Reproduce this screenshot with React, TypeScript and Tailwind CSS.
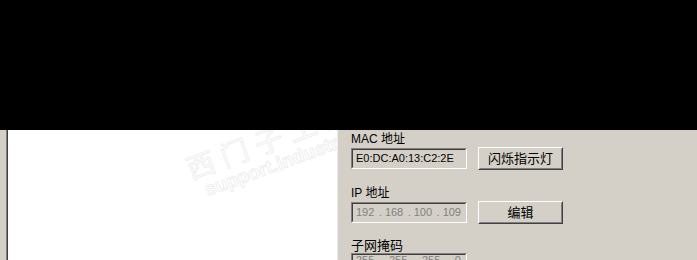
const FONT = "font-['Liberation_Sans','Noto_Sans_CJK_SC',sans-serif]"

function Field({ parts, disabled = false }: { parts: string[]; disabled?: boolean }) {
  return (
    <div className="h-[21px] w-[116px] border border-t-[#808080] border-l-[#808080] border-r-white border-b-white">
      <div
        className={`flex h-full w-full items-center whitespace-nowrap border border-t-[#404040] border-l-[#404040] border-r-[#d4d0c8] border-b-[#d4d0c8] bg-[#d4d0c8] pl-[3px] text-[11px] leading-none ${
          disabled ? 'justify-between pr-[4px] text-[#808080]' : 'pr-[3px] text-black'
        }`}
      >
        {parts.map((p, i) => (
          <span key={i}>{i > 0 && disabled ? `. ${p}` : p}</span>
        ))}
      </div>
    </div>
  )
}

function Button({ label }: { label: string }) {
  return (
    <div className="h-[23px] w-[85px] border border-t-white border-l-white border-r-[#404040] border-b-[#404040]">
      <div className="flex h-full w-full items-center justify-center border border-t-[#d4d0c8] border-l-[#d4d0c8] border-r-[#808080] border-b-[#808080] bg-[#d4d0c8] text-[13px] leading-none text-black">
        {label}
      </div>
    </div>
  )
}

export default function App() {
  return (
    <div className={`flex h-[260px] w-[697px] flex-col overflow-hidden bg-black ${FONT}`}>
      <div className="h-[130px] shrink-0 bg-black" />
      <div className="flex h-[130px] shrink-0">
        <div className="w-[6px] bg-[#d4d0c8]" />
        <div className="w-px bg-[#808080]" />
        <div className="w-px bg-[#404040]" />
        <div className="relative w-[329px] overflow-hidden bg-white">
          <div className="pointer-events-none absolute left-[178px] top-[-4px] -rotate-[20deg] select-none">
            <div className="whitespace-nowrap text-[28px] leading-none tracking-[8px] text-transparent [-webkit-text-stroke:1px_#efefef]">
              西门子工业
            </div>
            <div className="whitespace-nowrap pl-[10px] text-[19px] font-bold leading-none text-transparent [-webkit-text-stroke:1px_#efefef]">
              support.industry
            </div>
          </div>
        </div>
        <div className="w-px bg-[#ececec]" />
        <div className="flex flex-1 flex-col bg-[#d4d0c8] pl-[13px] pt-[2px] text-[12px] text-black">
          <div className="h-[15px] leading-[15px]">MAC 地址</div>
          <div className="flex items-center gap-[11px]">
            <Field parts={['E0:DC:A0:13:C2:2E']} />
            <Button label="闪烁指示灯" />
          </div>
          <div className="mt-[16px] h-[15px] leading-[15px]">IP 地址</div>
          <div className="flex items-center gap-[11px]">
            <Field parts={['192', '168', '100', '109']} disabled />
            <Button label="编辑" />
          </div>
          <div className="mt-[14px] h-[15px] text-[13px] leading-[15px]">子网掩码</div>
          <Field parts={['255', '255', '255', '0']} disabled />
        </div>
      </div>
    </div>
  )
}
